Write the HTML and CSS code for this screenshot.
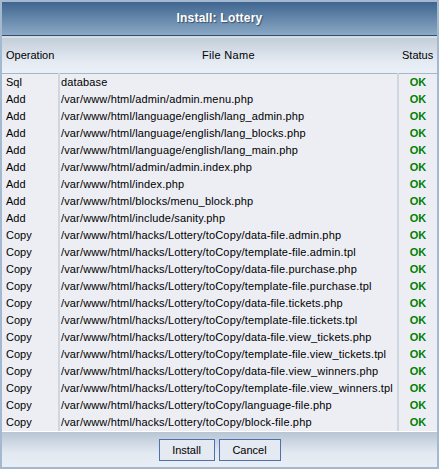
FILE: index.html
```html
<!DOCTYPE html>
<html>
<head>
<meta charset="utf-8">
<link rel="stylesheet" href="styles.css">
</head>
<body>
<div class="dialog">
  <div class="title">Install: Lottery</div>
  <table class="files">
    <thead>
      <tr><th class="op">Operation</th><th class="fn">File Name</th><th class="st">Status</th></tr>
    </thead>
    <tbody>
      <tr><td class="op">Sql</td><td class="fn">database</td><td class="st">OK</td></tr>
      <tr><td class="op">Add</td><td class="fn">/var/www/html/admin/admin.menu.php</td><td class="st">OK</td></tr>
      <tr><td class="op">Add</td><td class="fn">/var/www/html/language/english/lang_admin.php</td><td class="st">OK</td></tr>
      <tr><td class="op">Add</td><td class="fn">/var/www/html/language/english/lang_blocks.php</td><td class="st">OK</td></tr>
      <tr><td class="op">Add</td><td class="fn">/var/www/html/language/english/lang_main.php</td><td class="st">OK</td></tr>
      <tr><td class="op">Add</td><td class="fn">/var/www/html/admin/admin.index.php</td><td class="st">OK</td></tr>
      <tr><td class="op">Add</td><td class="fn">/var/www/html/index.php</td><td class="st">OK</td></tr>
      <tr><td class="op">Add</td><td class="fn">/var/www/html/blocks/menu_block.php</td><td class="st">OK</td></tr>
      <tr><td class="op">Add</td><td class="fn">/var/www/html/include/sanity.php</td><td class="st">OK</td></tr>
      <tr><td class="op">Copy</td><td class="fn">/var/www/html/hacks/Lottery/toCopy/data-file.admin.php</td><td class="st">OK</td></tr>
      <tr><td class="op">Copy</td><td class="fn">/var/www/html/hacks/Lottery/toCopy/template-file.admin.tpl</td><td class="st">OK</td></tr>
      <tr><td class="op">Copy</td><td class="fn">/var/www/html/hacks/Lottery/toCopy/data-file.purchase.php</td><td class="st">OK</td></tr>
      <tr><td class="op">Copy</td><td class="fn">/var/www/html/hacks/Lottery/toCopy/template-file.purchase.tpl</td><td class="st">OK</td></tr>
      <tr><td class="op">Copy</td><td class="fn">/var/www/html/hacks/Lottery/toCopy/data-file.tickets.php</td><td class="st">OK</td></tr>
      <tr><td class="op">Copy</td><td class="fn">/var/www/html/hacks/Lottery/toCopy/template-file.tickets.tpl</td><td class="st">OK</td></tr>
      <tr><td class="op">Copy</td><td class="fn">/var/www/html/hacks/Lottery/toCopy/data-file.view_tickets.php</td><td class="st">OK</td></tr>
      <tr><td class="op">Copy</td><td class="fn">/var/www/html/hacks/Lottery/toCopy/template-file.view_tickets.tpl</td><td class="st">OK</td></tr>
      <tr><td class="op">Copy</td><td class="fn">/var/www/html/hacks/Lottery/toCopy/data-file.view_winners.php</td><td class="st">OK</td></tr>
      <tr><td class="op">Copy</td><td class="fn">/var/www/html/hacks/Lottery/toCopy/template-file.view_winners.tpl</td><td class="st">OK</td></tr>
      <tr><td class="op">Copy</td><td class="fn">/var/www/html/hacks/Lottery/toCopy/language-file.php</td><td class="st">OK</td></tr>
      <tr><td class="op">Copy</td><td class="fn">/var/www/html/hacks/Lottery/toCopy/block-file.php</td><td class="st">OK</td></tr>
    </tbody>
  </table>
  <div class="footer">
    <button class="btn">Install</button>
    <button class="btn">Cancel</button>
  </div>
</div>
</body>
</html>
```

FILE: styles.css
```css
html, body {
  margin: 0;
  padding: 0;
}
body {
  font-family: "Liberation Sans", Arial, sans-serif;
  font-size: 11px;
  color: #000;
  background: #fff;
}
.dialog {
  width: 435px;
  height: 465px;
  border: 2px solid #a4b9d0;
  background: #eceef4;
  display: flex;
  flex-direction: column;
}
.title {
  height: 33px;
  line-height: 33px;
  text-align: center;
  color: #fff;
  font-weight: bold;
  font-size: 12px;
  letter-spacing: 0.2px;
  text-shadow: 1px 1px 1px #33506f;
  background: linear-gradient(#3f6590, #8ba9c5);
  border-bottom: 1px solid #34506f;
}
.files {
  border-collapse: collapse;
  width: 100%;
  table-layout: fixed;
}
.files thead th {
  height: 36px;
  font-weight: normal;
  background: linear-gradient(#c2cdd9, #e5ebf3 70%, #ebf0f7);
  border-top: 1px solid #d0dae5;
  border-bottom: 1px solid #a5b6ca;
  padding: 0 4px;
  vertical-align: middle;
}
.files th.op { width: 49px; text-align: left; }
.files th.fn { text-align: center; letter-spacing: 0.3px; }
.files th.st { width: 31px; text-align: right; padding-right: 4px; }
.files td {
  height: 17px;
  padding: 0;
  line-height: 17px;
  white-space: nowrap;
}
.files td.op { padding-left: 4px; border-right: 2px solid #cdd6e1; }
.files td.fn { padding-left: 1px; letter-spacing: 0.15px; border-right: 2px solid #cdd6e1; }
.files td.st {
  text-align: center;
  color: #008000;
  font-weight: bold;
}
.footer {
  flex: 1;
  border-top: 1px solid #fff;
  background: linear-gradient(#b8c5d4, #e3e9f1 60%, #e9eef5);
  display: flex;
  justify-content: center;
  align-items: center;
  gap: 4px;
}
.btn {
  font-family: "Liberation Sans", Arial, sans-serif;
  font-size: 11px;
  height: 22px;
  padding: 0 8px;
  border: 1px solid #4d71ad;
  background: #e5e9f1;
  color: #000;
}
.btn:first-child { width: 56px; }
.btn:last-child { width: 62px; }
```
